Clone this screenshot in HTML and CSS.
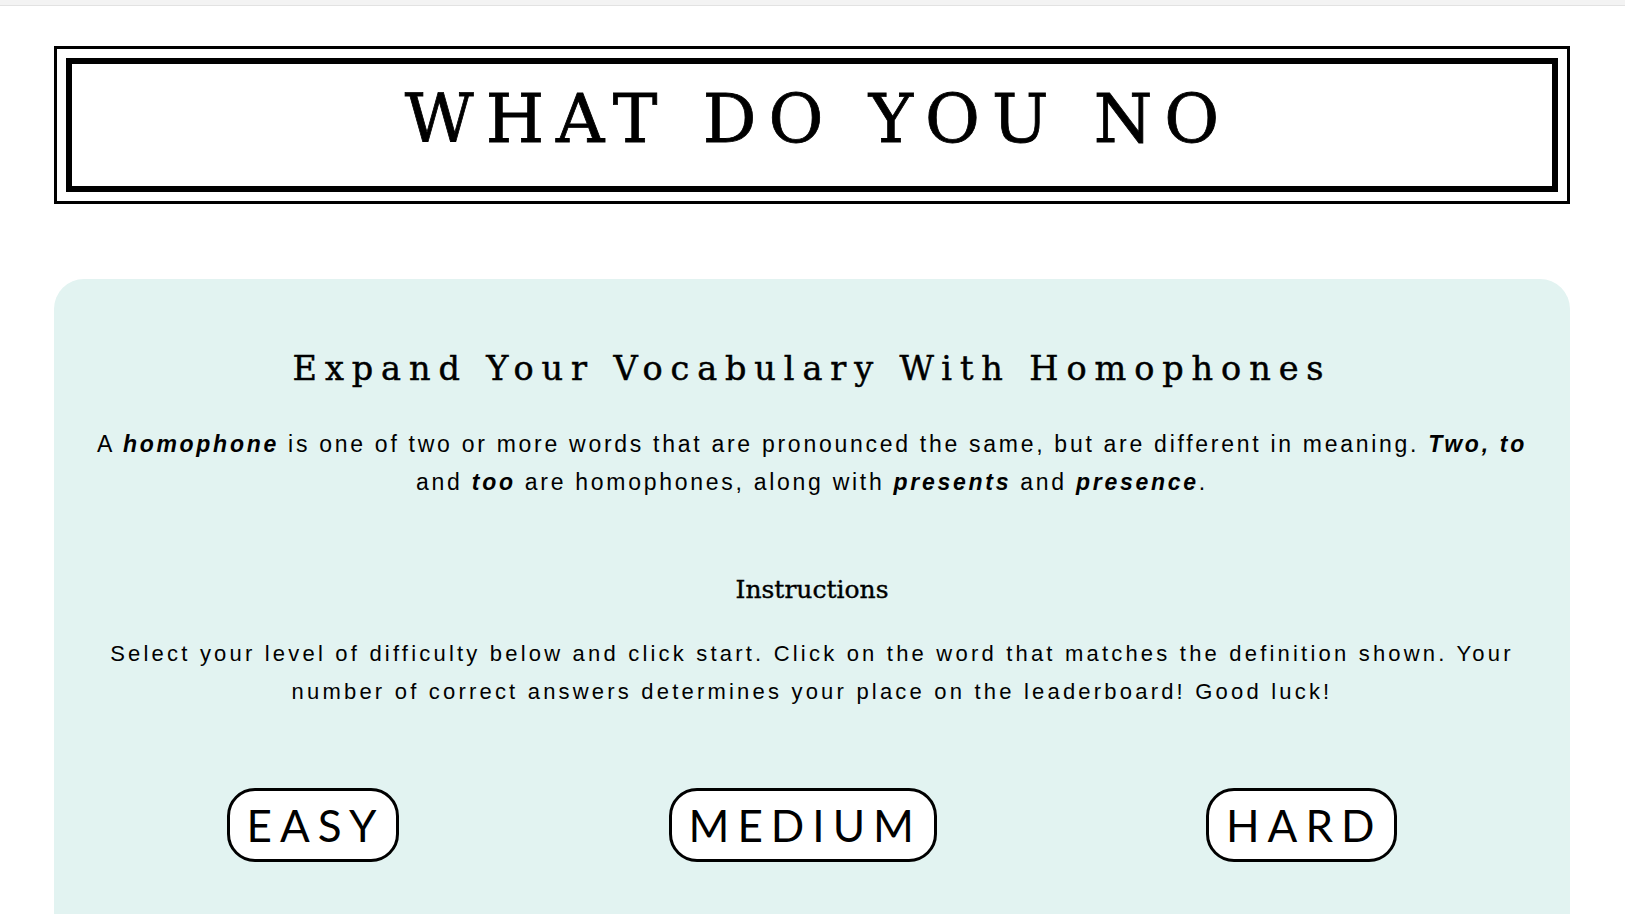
FILE: index.html
```html
<!DOCTYPE html>
<html>
<head>
<meta charset="utf-8">
<title>What Do You No</title>
<link rel="stylesheet" href="styles.css">
</head>
<body>
<div class="topstrip"></div>
<header class="masthead">
  <div class="masthead-inner">
    <h1 class="title">WHAT DO YOU NO</h1>
  </div>
</header>
<main class="card">
  <h2 class="heading">Expand Your Vocabulary With Homophones</h2>
  <p class="text intro">A <b><i>homophone</i></b> is one of two or more words that are pronounced the same, but are different in meaning. <b><i>Two, to</i></b> and <b><i>too</i></b> are homophones, along with <b><i>presents</i></b> and <b><i>presence</i></b>.</p>
  <h3 class="subheading">Instructions</h3>
  <p class="text instr">Select your level of difficulty below and click start. Click on the word that matches the definition shown. Your number of correct answers determines your place on the leaderboard! Good luck!</p>
  <div class="levels">
    <button class="level">EASY</button>
    <button class="level">MEDIUM</button>
    <button class="level">HARD</button>
  </div>
</main>
</body>
</html>
```
FILE: styles.css
```css
html, body {
  margin: 0;
  padding: 0;
  background: #ffffff;
  color: #000;
}
body {
  overflow: hidden;
  height: 914px;
}
.topstrip {
  height: 5px;
  background: #f3f3f3;
  border-bottom: 1px solid #e2e2e2;
}
.masthead {
  margin: 40px 55px 0 54px;
  border: 3px solid #000;
  padding: 9px;
}
.masthead-inner {
  border: 6px solid #000;
  height: 122px;
  display: flex;
  align-items: center;
  justify-content: center;
}
.title {
  margin: 0 0 12px 12px;
  font-family: "DejaVu Serif", serif;
  font-weight: normal;
  font-size: 67px;
  letter-spacing: 12px;
  line-height: 1;
  -webkit-text-stroke: 0.8px #000;
}
.card {
  margin: 75px 55px 0 54px;
  background: #e2f3f1;
  border-radius: 30px;
  padding: 70px 37px 120px;
  text-align: center;
}
.heading {
  margin: 0;
  font-family: "DejaVu Serif", serif;
  font-weight: normal;
  font-size: 33.5px;
  letter-spacing: 7.9px;
  line-height: 40px;
  -webkit-text-stroke: 0.5px #000;
}
.text {
  font-family: "Liberation Sans", Arial, sans-serif;
  font-size: 23px;
  line-height: 38px;
  margin: 0;
}
.intro {
  margin-top: 36px;
  letter-spacing: 2.72px;
}
.subheading {
  margin: 74px 0 0;
  font-family: "DejaVu Serif", serif;
  font-weight: normal;
  font-size: 25px;
  line-height: 30px;
  -webkit-text-stroke: 0.4px #000;
}
.instr {
  margin-top: 30px;
  font-size: 22px;
  letter-spacing: 3.2px;
}
.levels {
  margin-top: 77px;
  padding: 0 1px;
  display: flex;
  justify-content: space-around;
  align-items: center;
}
.level {
  font-family: Lato, sans-serif;
  font-size: 44px;
  letter-spacing: 8px;
  background: #fff;
  color: #000;
  border: 3px solid #000;
  border-radius: 28px;
  padding: 10px 12px 10px 17px;
  line-height: 1.1;
}
```
